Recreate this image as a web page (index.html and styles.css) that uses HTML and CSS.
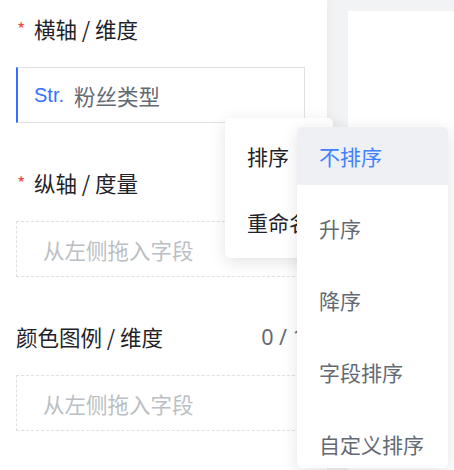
FILE: index.html
```html
<!DOCTYPE html>
<html>
<head>
    <title>Chart Fields</title>
    <link rel="stylesheet" href="styles.css">
</head>
<body>
    <div class="layout">
        <div class="panel">
            <div class="section">
                <div class="label"><span class="star">*</span>横轴 / 维度</div>
                <div class="field filled">
                    <span class="type">Str.</span>
                    <span class="name">粉丝类型</span>
                </div>
            </div>
            <div class="section">
                <div class="label"><span class="star">*</span>纵轴 / 度量</div>
                <div class="field empty">从左侧拖入字段</div>
            </div>
            <div class="section">
                <div class="label">颜色图例 / 维度<span class="count">0 / 1</span></div>
                <div class="field empty">从左侧拖入字段</div>
            </div>
        </div>
        <div class="side">
            <div class="card"></div>
        </div>
    </div>

    <!-- context menu for the field -->
    <div class="menu">
        <div class="menu-item">排序</div>
        <div class="menu-item">重命名</div>
    </div>
    <div class="submenu">
        <div class="menu-item active">不排序</div>
        <div class="menu-item">升序</div>
        <div class="menu-item">降序</div>
        <div class="menu-item">字段排序</div>
        <div class="menu-item">自定义排序</div>
    </div>
</body>
</html>
```

FILE: styles.css
```css
body {
    margin: 0;
    font-family: "Noto Sans CJK SC", "Noto Sans", sans-serif;
    background-color: #fff;
    overflow: hidden;
}

.layout {
    display: flex;
    height: 470px;
}

.panel {
    width: 327px;
    padding: 14px 22px 0 16px;
    box-sizing: border-box;
    background-color: #fff;
    box-shadow: 2px 0 8px rgba(0, 0, 0, 0.04);
    position: relative;
    z-index: 1;
}

.side {
    flex: 1;
    background-color: #f2f3f5;
    padding: 11px 0 0 21px;
}

.card {
    background-color: #fff;
    height: 100%;
}

.section {
    margin-bottom: 45px;
}

.label {
    display: flex;
    align-items: center;
    height: 28px;
    font-size: 21.5px;
    color: #1f2329;
    margin-bottom: 25px;
}

.star {
    color: #f54a45;
    width: 17px;
    margin-left: 1px;
    font-size: 18px;
}

.count {
    margin-left: auto;
    color: #646a73;
    font-family: "Noto Sans", sans-serif;
}

.field {
    height: 56px;
    box-sizing: border-box;
    display: flex;
    align-items: center;
    font-size: 21.5px;
}

.field.filled {
    border: 1px solid #dee0e3;
    border-left: 2px solid #3370ff;
    padding-left: 16px;
}

.type {
    color: #3370ff;
    font-family: "Liberation Sans", sans-serif;
    font-size: 20px;
    margin-right: 10px;
}

.name {
    color: #646a73;
}

.field.empty {
    border: 1px dashed #dee0e3;
    padding-left: 26px;
    color: #bbbfc4;
}

.menu {
    position: absolute;
    left: 225px;
    top: 118px;
    width: 108px;
    height: 140px;
    background-color: #fff;
    border-radius: 5px;
    box-shadow: 0 4px 16px rgba(31, 35, 41, 0.12);
    padding-top: 9px;
    box-sizing: border-box;
    z-index: 2;
}

.menu .menu-item {
    height: 58px;
    margin-bottom: 8px;
    color: #1f2329;
}

.submenu {
    position: absolute;
    left: 297px;
    top: 127px;
    width: 151px;
    height: 341px;
    background-color: #fff;
    border-radius: 5px;
    box-shadow: 0 4px 16px rgba(31, 35, 41, 0.12);
    overflow: hidden;
    z-index: 3;
}

.menu-item {
    display: flex;
    align-items: center;
    padding-left: 22px;
    font-size: 21px;
    white-space: nowrap;
}

.submenu .menu-item {
    height: 58px;
    margin-bottom: 14px;
    color: #646a73;
}

.submenu .menu-item.active {
    background-color: #eff0f3;
    color: #4080ff;
}
```
